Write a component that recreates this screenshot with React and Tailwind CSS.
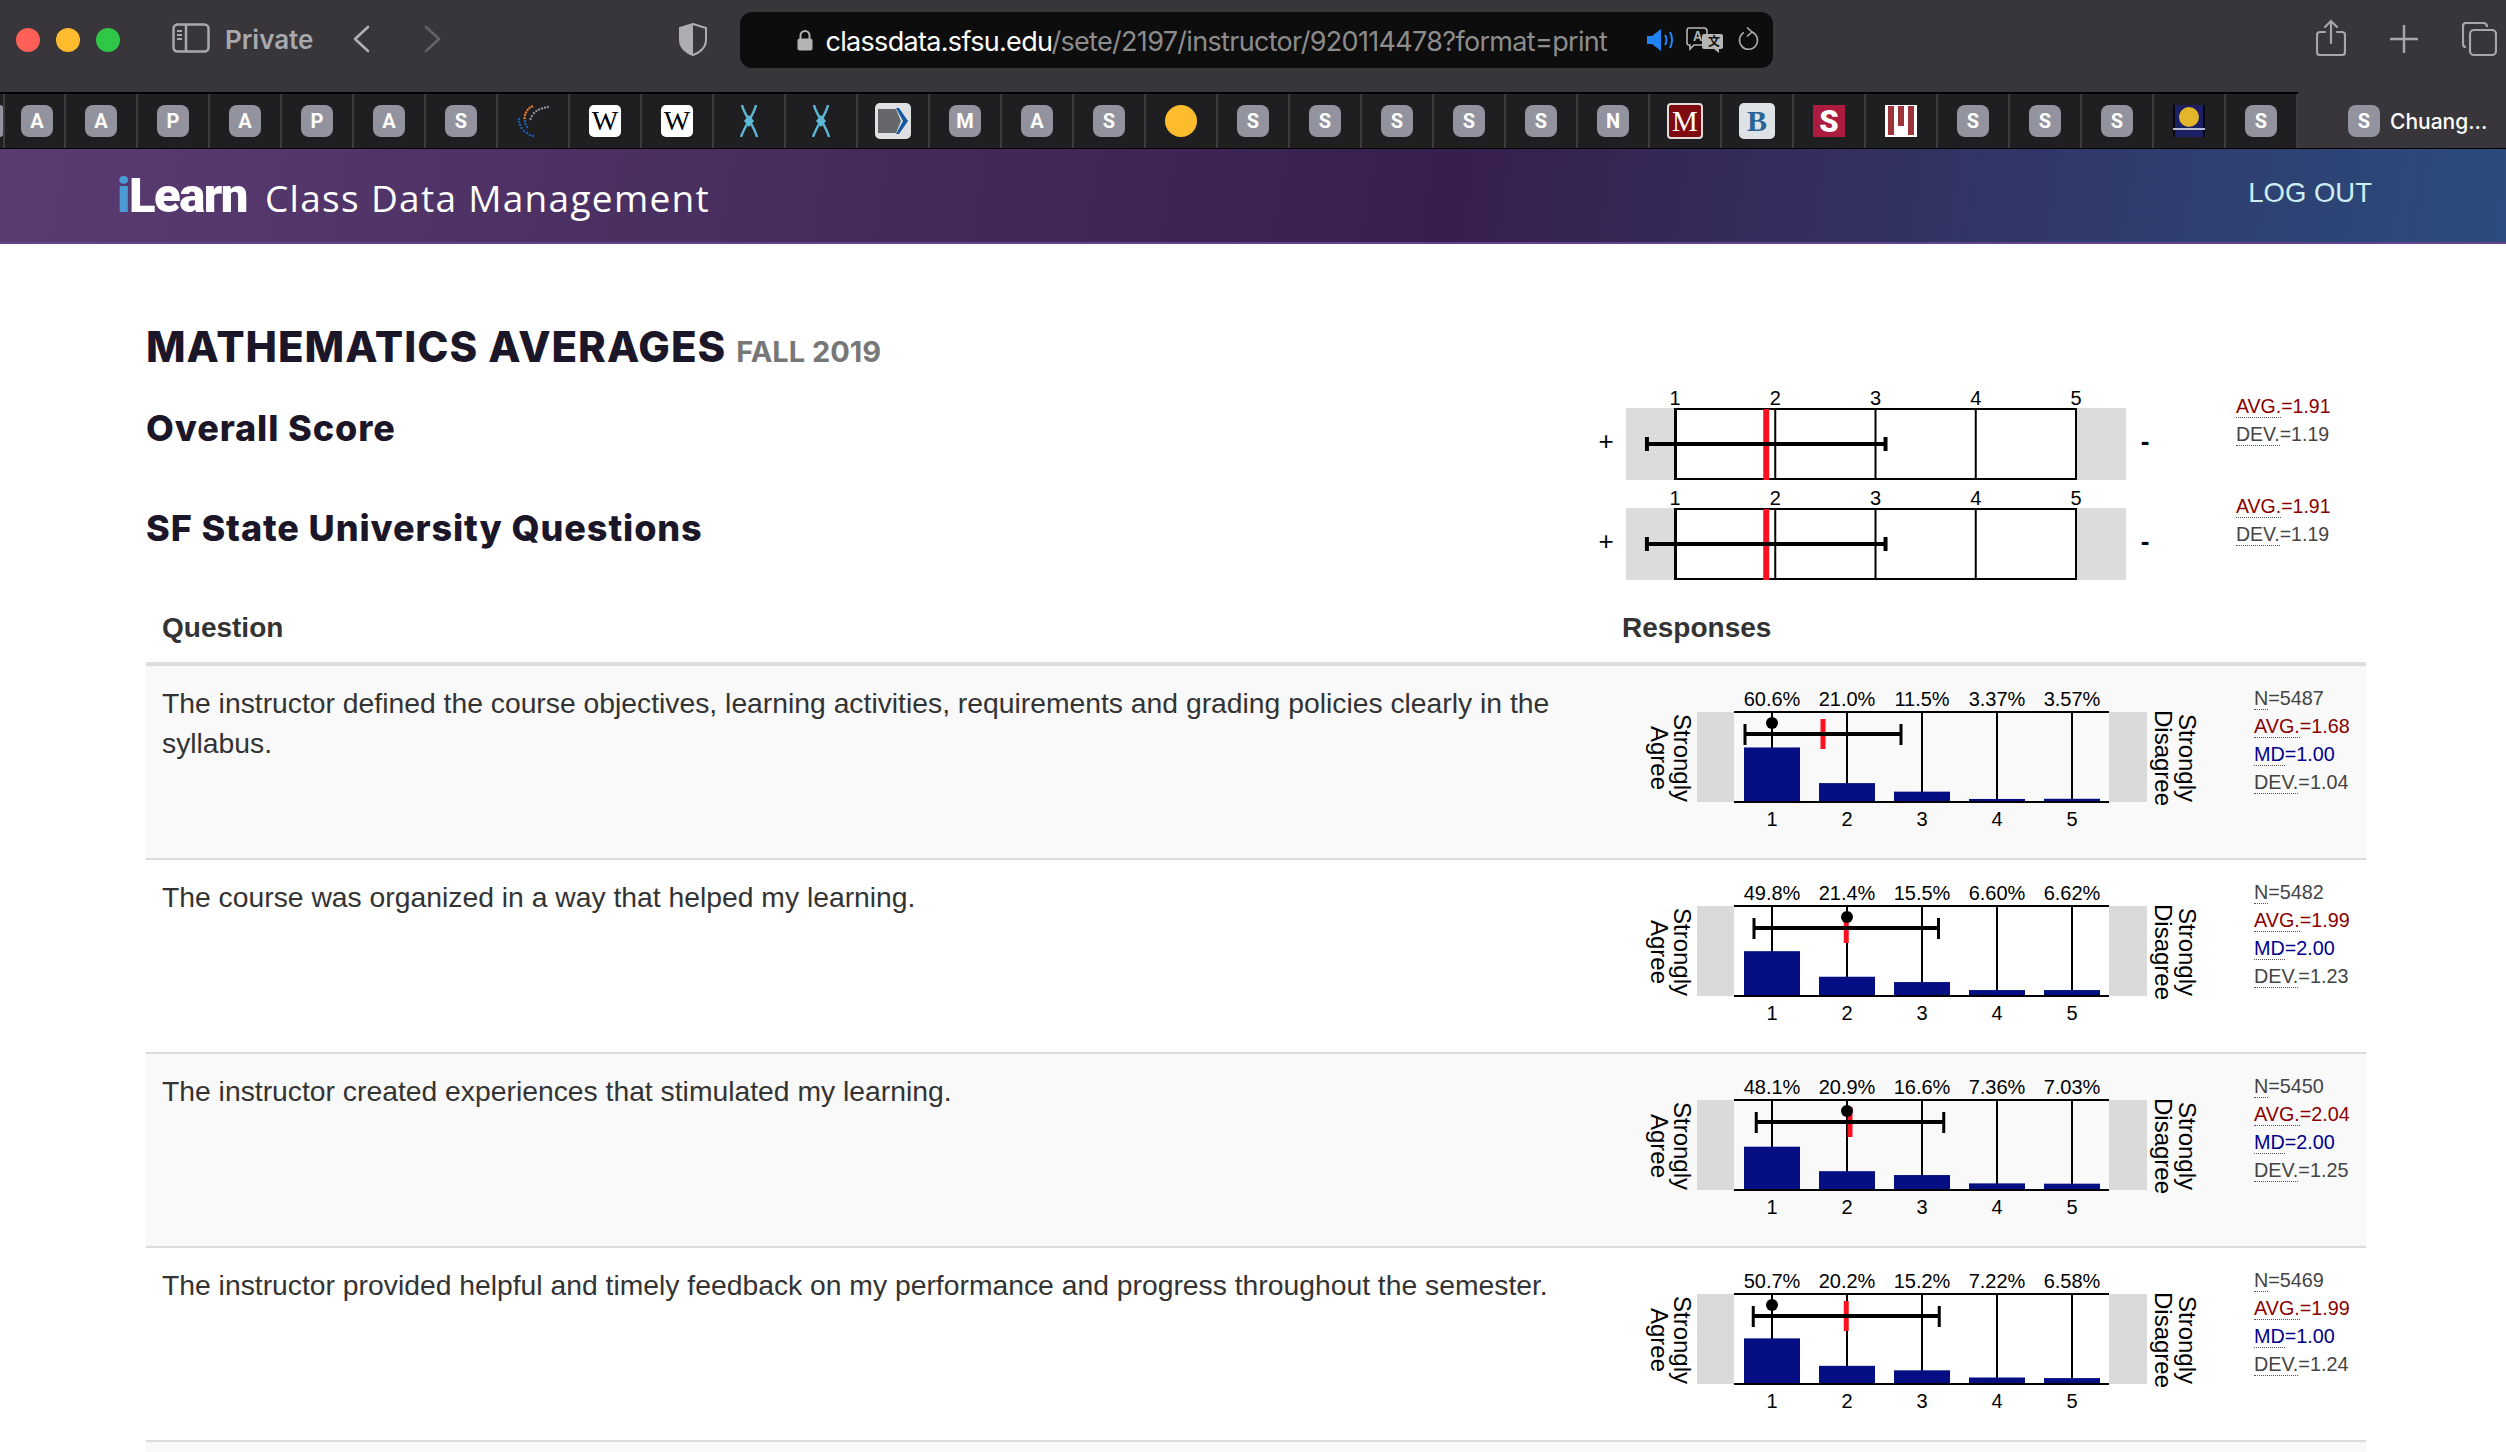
import React from "react";

const tabs = ["A","A","P","A","P","A","S","swirl","wiki","wiki","helix","helix","arrow","M","A","S","dot","S","S","S","S","S","N","maroon","bruin","red","bars","S","S","S","moon","S"];

const rows = [
  {
    text: "The instructor defined the course objectives, learning activities, requirements and grading policies clearly in the syllabus.",
    pct: [60.6, 21.0, 11.5, 3.37, 3.57],
    labels: ["60.6%", "21.0%", "11.5%", "3.37%", "3.57%"],
    n: 5487, avg: "1.68", md: "1.00", dev: "1.04",
  },
  {
    text: "The course was organized in a way that helped my learning.",
    pct: [49.8, 21.4, 15.5, 6.6, 6.62],
    labels: ["49.8%", "21.4%", "15.5%", "6.60%", "6.62%"],
    n: 5482, avg: "1.99", md: "2.00", dev: "1.23",
  },
  {
    text: "The instructor created experiences that stimulated my learning.",
    pct: [48.1, 20.9, 16.6, 7.36, 7.03],
    labels: ["48.1%", "20.9%", "16.6%", "7.36%", "7.03%"],
    n: 5450, avg: "2.04", md: "2.00", dev: "1.25",
  },
  {
    text: "The instructor provided helpful and timely feedback on my performance and progress throughout the semester.",
    pct: [50.7, 20.2, 15.2, 7.22, 6.58],
    labels: ["50.7%", "20.2%", "15.2%", "7.22%", "6.58%"],
    n: 5469, avg: "1.99", md: "1.00", dev: "1.24",
  },
];

const swirlDots = [
  [31, 2, "#8a8d93"], [28, 2.5, "#8a8d93"], [25, 3.5, "#8a8d93"], [22, 4.5, "#8a8d93"], [19.5, 6, "#8a8d93"], [17, 8, "#8a8d93"], [15, 11, "#8a8d93"], [13.5, 14, "#8a8d93"],
  [15, 1.5, "#e8762c"], [12.5, 3, "#e8762c"], [10.5, 5, "#e8762c"], [9, 7.5, "#e8762c"], [8, 10, "#e8762c"], [7.5, 13, "#e8762c"],
  [2, 14, "#1f5fb0"], [2, 17, "#1f5fb0"], [3, 20, "#1f5fb0"], [4.5, 23, "#1f5fb0"], [7, 26, "#1f5fb0"], [10, 28, "#1f5fb0"], [13, 30, "#1f5fb0"], [16, 31, "#1f5fb0"], [8, 16, "#1f5fb0"], [8.5, 19, "#1f5fb0"], [10, 22, "#1f5fb0"],
];

const Letter = ({ children }) => (
  <div className="w-8 h-8 rounded-[8px] bg-[#92939e] flex items-center justify-center text-white text-[20px] font-bold leading-none font-['Roboto',sans-serif]">
    {children}
  </div>
);

const Swirl = () => (
  <svg width="32" height="32" viewBox="0 0 32 32">
    {swirlDots.map(([cx, cy, fill], i) => (
      <circle key={i} cx={cx} cy={cy} r="1.2" fill={fill} />
    ))}
  </svg>
);

const Helix = () => (
  <svg width="32" height="32" viewBox="0 0 32 32" fill="none" stroke="#5cb8d6" strokeWidth="2.4">
    <path d="M9 0 C11 10 21 20 24 32" />
    <path d="M23 0 C21 10 12 20 8 32" />
    <path d="M16 10 L21 16 L16 22 L11 16 Z" fill="#5cb8d6" stroke="none" />
  </svg>
);

const Favicon = ({ kind }) => {
  if (kind.length === 1) return <Letter>{kind}</Letter>;
  if (kind === "swirl") return <Swirl />;
  if (kind === "helix") return <Helix />;
  if (kind === "dot") return <div className="w-8 h-8 rounded-full bg-[#fdbc2d]" />;
  if (kind === "wiki") {
    return (
      <div className="w-8 h-8 rounded-[5px] bg-white flex items-center justify-center text-black text-[28px] leading-none font-['Liberation_Serif',serif]">
        W
      </div>
    );
  }
  if (kind === "arrow") {
    return (
      <svg width="36" height="36" viewBox="0 0 36 36">
        <rect width="36" height="36" rx="5" fill="#dfe0e2" />
        <path d="M3 6 H21 L26 18 L21 30 H3 Z" fill="#66676b" />
        <path d="M21 5 H24 L33 18 L24 31 H21 L28 18 Z" fill="#12599f" />
      </svg>
    );
  }
  if (kind === "maroon") {
    return (
      <div className="w-9 h-9 rounded-[4px] bg-[#7f0a0f] border-2 border-[#e5dcdc] flex items-center justify-center text-white text-[29px] leading-none font-['Liberation_Serif',serif]">
        M
      </div>
    );
  }
  if (kind === "bruin") {
    return (
      <div className="w-9 h-9 rounded-[5px] bg-[#dfe2e5] flex items-center justify-center text-[#2a6396] text-[30px] font-bold leading-none font-['Liberation_Serif',serif]">
        B
      </div>
    );
  }
  if (kind === "red") {
    return (
      <div className="w-8 h-8 bg-[#ac1c3e] flex items-center justify-center text-white text-[31px] font-black leading-none font-['Roboto',sans-serif]">
        S
      </div>
    );
  }
  if (kind === "bars") {
    return (
      <svg width="32" height="32" viewBox="0 0 32 32">
        <rect width="32" height="32" fill="#fff" />
        <rect x="3" y="1" width="6" height="29" fill="#9b3338" />
        <rect x="13" y="1" width="6" height="20" fill="#9b3338" />
        <rect x="23" y="1" width="6" height="29" fill="#9b3338" />
      </svg>
    );
  }
  if (kind === "moon") {
    return (
      <svg width="32" height="32" viewBox="0 0 32 32">
        <rect width="32" height="32" fill="#050510" />
        <rect x="2" y="0" width="28" height="32" fill="#1b2063" />
        <ellipse cx="16" cy="12" rx="10" ry="10" fill="#e3b52c" />
        <rect x="0" y="23" width="32" height="2" fill="#b9bcd2" />
      </svg>
    );
  }
  return null;
};

const TitleBar = () => (
  <div className="relative h-[92px] bg-[#38363b] flex items-start shrink-0">
    <div className="flex gap-4 pl-4 pt-7">
      <div className="w-6 h-6 rounded-full bg-[#fe5f57]" />
      <div className="w-6 h-6 rounded-full bg-[#febc2e]" />
      <div className="w-6 h-6 rounded-full bg-[#30c748]" />
    </div>
    <svg className="ml-[52px] mt-[23px]" width="38" height="30" viewBox="0 0 38 30" fill="none" stroke="#a9a8ad" strokeWidth="2.5">
      <rect x="1.5" y="1.5" width="35" height="27" rx="4" />
      <path d="M14 2 V28" />
      <path d="M5 8 H10 M5 12 H10 M5 16 H10" strokeWidth="2" />
    </svg>
    <span className="ml-[15px] mt-[24px] text-[26px] leading-[32px] font-semibold text-[#a9a8ad] font-['Inter',sans-serif]">Private</span>
    <svg className="ml-[39px] mt-[25px]" width="18" height="28" viewBox="0 0 18 28" fill="none" stroke="#b0afb3" strokeWidth="2.6" strokeLinecap="round" strokeLinejoin="round">
      <path d="M16 2 L3 14 L16 26" />
    </svg>
    <svg className="ml-[54px] mt-[25px]" width="18" height="28" viewBox="0 0 18 28" fill="none" stroke="#636266" strokeWidth="2.6" strokeLinecap="round" strokeLinejoin="round">
      <path d="M2 2 L15 14 L2 26" />
    </svg>
    <svg className="ml-[237px] mt-[23px]" width="28" height="33" viewBox="0 0 28 33">
      <path d="M14 1 L27 5 V17 C27 25 20 30 14 32 C8 30 1 25 1 17 V5 Z" fill="none" stroke="#aeadb2" strokeWidth="2" />
      <path d="M14 1 V32 C8 30 1 25 1 17 V5 Z" fill="#aeadb2" />
    </svg>
    <div className="ml-[33px] mt-3 w-[1033px] h-[56px] rounded-[12px] bg-[#0d0d0d] flex items-center">
      <svg className="ml-[57px]" width="16" height="22" viewBox="0 0 16 22">
        <path d="M3.5 10 V6.5 a4.5 4.5 0 0 1 9 0 V10" fill="none" stroke="#b3b3b3" strokeWidth="2" />
        <rect x="0.5" y="9.5" width="15" height="12" rx="2" fill="#b3b3b3" />
      </svg>
      <span className="ml-[12px] pt-[2px] text-[27px] leading-none tracking-[-0.68px] whitespace-nowrap font-['Inter',sans-serif] text-white">
        classdata.sfsu.edu<span className="text-[#8c8c8c]">/sete/2197/instructor/920114478?format=print</span>
      </span>
    </div>
    <svg className="absolute left-[1647px] top-[29px]" width="27" height="22" viewBox="0 0 27 22">
      <path d="M0 7 H5 L14 0 V22 L5 15 H0 Z" fill="#1e84f7" />
      <path d="M18 6 Q21 11 18 16 M23 3 Q27 11 23 19" fill="none" stroke="#1e84f7" strokeWidth="2" />
    </svg>
    <svg className="absolute left-[1686px] top-[27px]" width="38" height="27" viewBox="0 0 38 27">
      <path d="M3 1 H18 Q21 1 21 4 V16 Q21 18 18 18 H8 L4 22 V18 H3 Q1 18 1 16 V4 Q1 1 3 1 Z" fill="none" stroke="#b5b5b5" strokeWidth="1.6" />
      <text x="7" y="14" fontSize="13" fontFamily="Inter" fontWeight="600" fill="#b5b5b5">A</text>
      <path d="M18 7 H35 Q37 7 37 9 V20 Q37 22 35 22 H33 V26 L28 22 H18 Q16 22 16 20 V9 Q16 7 18 7 Z" fill="#b5b5b5" />
      <text x="22" y="19" fontSize="12" fontFamily="Noto Sans CJK SC" fontWeight="700" fill="#111">文</text>
    </svg>
    <svg className="absolute left-[1738px] top-[27px]" width="22" height="24" viewBox="0 0 22 24" fill="none" stroke="#a9a9a9" strokeWidth="1.6">
      <path d="M14 5 A9 9 0 1 1 6 5.5" />
      <path d="M9 0.5 L14 5 L9 9.5" />
    </svg>
    <svg className="absolute left-[2316px] top-[19px]" width="30" height="37" viewBox="0 0 30 37" fill="none" stroke="#a7a6ab" strokeWidth="2.2" strokeLinecap="round">
      <path d="M9 13 H4 Q1 13 1 16 V33 Q1 36 4 36 H26 Q29 36 29 33 V16 Q29 13 26 13 H21" />
      <path d="M15 24 V2 M9 8 L15 2 L21 8" />
    </svg>
    <svg className="absolute left-[2390px] top-[25px]" width="28" height="28" viewBox="0 0 28 28" stroke="#a7a6ab" strokeWidth="2.4">
      <path d="M14 0 V28 M0 14 H28" />
    </svg>
    <svg className="absolute left-[2462px] top-[22px]" width="35" height="34" viewBox="0 0 35 34" fill="none" stroke="#a7a6ab" strokeWidth="2.2">
      <path d="M4 25 Q1 25 1 22 V4 Q1 1 4 1 H21 Q25 1 25 5" />
      <rect x="8" y="8" width="26" height="25" rx="4" />
    </svg>
  </div>
);

const TabBar = () => (
  <div className="h-[57px] bg-[#38363b] flex shrink-0 overflow-hidden border-b border-black">
    <div className="flex bg-[#1f1f21] border-t-2 border-t-black">
      <div className="w-[5px] border-r-2 border-[#3c3c3e] overflow-hidden pt-[11px]">
        <div className="w-[3px] h-8 rounded-r-[6px] bg-[#92939e]" />
      </div>
      {tabs.map((kind, i) => (
        <div
          key={i}
          className={`${i === 0 ? "w-[61px] pl-[16px] justify-start" : "w-[72px] justify-center"} h-[54px] border-r-2 border-[#3c3c3e] flex items-center`}
        >
          <Favicon kind={kind} />
        </div>
      ))}
    </div>
    <div className="flex items-center pl-[50px] pt-[2px]">
      <Letter>S</Letter>
      <span className="ml-[10px] text-white text-[21px] font-medium leading-none font-['Inter',sans-serif]">Chuang...</span>
    </div>
  </div>
);

const Header = () => (
  <div className="h-[95px] shrink-0 border-b-2 border-[#63428f] bg-[linear-gradient(100deg,#5a3c72_0%,#371f4d_58%,#2b4c7e_100%)] flex items-center justify-between pl-[117px] pr-[134px]">
    <div className="flex items-baseline">
      <span className="text-[49px] leading-none font-black tracking-[-1.5px] text-white font-['Roboto',sans-serif]">
        <span className="text-[#4a9bd6]">i</span>Learn
      </span>
      <span className="ml-[18px] text-[37px] leading-none tracking-[1.3px] text-white font-['Open_Sans',sans-serif]">Class Data Management</span>
    </div>
    <span className="mb-[6px] text-[27.5px] leading-none text-[#cdeef2] font-['Liberation_Sans',sans-serif]">LOG OUT</span>
  </div>
);

const Stat = ({ label, value, color }) => (
  <div className={`${color} h-7 leading-7 whitespace-nowrap`}>
    <span className="border-b border-dotted border-[#555555]">{label}</span>
    {value}
  </div>
);

// scale chart for the two summary rows, drawn at 570x100
const ScaleChart = ({ avg, dev }) => {
  const x = (v) => 85 + 100.25 * (v - 1);
  return (
    <svg width="570" height="100" viewBox="0 0 570 100" fontFamily="'Liberation Sans', sans-serif" fontSize="20" fill="#000">
      <rect x="36" y="23" width="500" height="72" fill="#dcdcdc" />
      <rect x="86" y="24" width="400" height="70" fill="#fff" stroke="#000" strokeWidth="2" />
      {[1, 2, 3, 4, 5].map((v) => (
        <g key={v}>
          <line x1={x(v)} x2={x(v)} y1="23" y2="95" stroke="#000" strokeWidth="2" />
          <text x={x(v)} y="20" textAnchor="middle">{v}</text>
        </g>
      ))}
      <rect x={x(avg) - 3} y="24" width="6" height="71" fill="#ff1020" />
      <line x1={x(avg - dev)} x2={x(avg + dev)} y1="59" y2="59" stroke="#000" strokeWidth="4" />
      <rect x={x(avg - dev) - 2} y="52" width="4" height="14" />
      <rect x={x(avg + dev) - 2} y="52" width="4" height="14" />
      <text x="16" y="65" textAnchor="middle" fontSize="26">+</text>
      <text x="555" y="65" textAnchor="middle" fontSize="26" fontWeight="700">-</text>
    </svg>
  );
};

// response chart for one question, drawn at 600x156 with room over the labels
const ResponseChart = ({ row }) => {
  const avg = parseFloat(row.avg);
  const dev = parseFloat(row.dev);
  const md = parseFloat(row.md);
  const x = (v) => 132 + 75 * (v - 1);
  return (
    <svg width="600" height="156" viewBox="0 -6 600 156" fontFamily="'Liberation Sans', sans-serif" fontSize="20" fill="#000">
      <rect x="57" y="22" width="37" height="90" fill="#dadada" />
      <rect x="469" y="22" width="38" height="90" fill="#dadada" />
      <line x1="94" x2="469" y1="22" y2="22" stroke="#000" strokeWidth="2" />
      {row.pct.map((p, i) => {
        let h = p * 0.9;
        return (
          <g key={i}>
            <line x1={x(i + 1)} x2={x(i + 1)} y1="22" y2="112" stroke="#000" strokeWidth="2" />
            <rect x={x(i + 1) - 28} y={112 - h} width="56" height={h} fill="#050f83" />
            <text x={x(i + 1)} y="16" textAnchor="middle">{row.labels[i]}</text>
            <text x={x(i + 1)} y="136" textAnchor="middle">{i + 1}</text>
          </g>
        );
      })}
      <line x1="94" x2="469" y1="112" y2="112" stroke="#000" strokeWidth="2" />
      <rect x={x(avg) - 2.5} y="29" width="5" height="30" fill="#ff1020" />
      <line x1={x(avg - dev)} x2={x(avg + dev)} y1="44" y2="44" stroke="#000" strokeWidth="4" />
      <rect x={x(avg - dev) - 1.5} y="34" width="3" height="21" />
      <rect x={x(avg + dev) - 1.5} y="34" width="3" height="21" />
      <ellipse cx={x(md)} cy="33" rx="6" ry="6" />
      <g fontSize="24" textAnchor="middle">
        <text transform="translate(34 68) rotate(90)">Strongly</text>
        <text transform="translate(11 68) rotate(90)">Agree</text>
        <text transform="translate(539 68) rotate(90)">Strongly</text>
        <text transform="translate(515 68) rotate(90)">Disagree</text>
      </g>
    </svg>
  );
};

const QuestionRow = ({ row, shaded }) => (
  <div className={`${shaded ? "bg-[#f9f9f9]" : "bg-white"} h-[194px] border-b-2 border-[#dddddd] flex`}>
    <div className="w-[1460px] shrink-0 px-4 pt-[17px] text-[28.3px] leading-[40px] text-[#333333]">{row.text}</div>
    <div className="flex">
      <div className="ml-[34px] mt-[18px] w-[600px] shrink-0">
        <ResponseChart row={row} />
      </div>
      <div className="ml-[14px] pt-[18px] text-[19.8px]">
        <Stat label="N" value={`=${row.n}`} color="text-[#444444]" />
        <Stat label="AVG." value={`=${row.avg}`} color="text-[#8b0000]" />
        <Stat label="MD" value={`=${row.md}`} color="text-[#00008b]" />
        <Stat label="DEV." value={`=${row.dev}`} color="text-[#444444]" />
      </div>
    </div>
  </div>
);

const Summary = ({ title }) => (
  <div className="h-[100px] flex">
    <h2 className="mt-[18px] w-[1444px] shrink-0 text-[36px] leading-[40px] font-extrabold tracking-[0.9px] text-[#1c1629] font-['Inter',sans-serif]">{title}</h2>
    <div className="mt-[-5px] shrink-0">
      <ScaleChart avg={1.91} dev={1.19} />
    </div>
    <div className="ml-[76px] pt-[2px] text-[19.5px]">
      <Stat label="AVG." value="=1.91" color="text-[#8b0000]" />
      <Stat label="DEV." value="=1.19" color="text-[#444444]" />
    </div>
  </div>
);

export default function App() {
  return (
    <div className="h-[1452px] w-[2506px] overflow-hidden flex flex-col bg-white font-['Liberation_Sans',sans-serif]">
      <TitleBar />
      <TabBar />
      <Header />
      <main className="ml-[146px] w-[2220px]">
        <div className="pt-[78px] h-[146px] flex items-baseline">
          <h1 className="text-[42px] leading-[50px] font-extrabold tracking-[1px] text-[#1c1629] font-['Inter',sans-serif]">MATHEMATICS AVERAGES</h1>
          <span className="ml-[10px] text-[29px] font-bold text-[#777777] font-['Inter',sans-serif]">FALL 2019</span>
        </div>
        <Summary title="Overall Score" />
        <Summary title="SF State University Questions" />
        <div className="h-[76px] border-b-4 border-[#dddddd] flex items-end text-[28px] font-bold text-[#333333]">
          <div className="w-[1476px] pl-4 pb-[13px]">Question</div>
          <div className="pb-[13px]">Responses</div>
        </div>
        {rows.map((row, i) => (
          <QuestionRow key={i} row={row} shaded={i % 2 === 0} />
        ))}
        <div className="h-5 bg-[#f9f9f9]" />
      </main>
    </div>
  );
}
